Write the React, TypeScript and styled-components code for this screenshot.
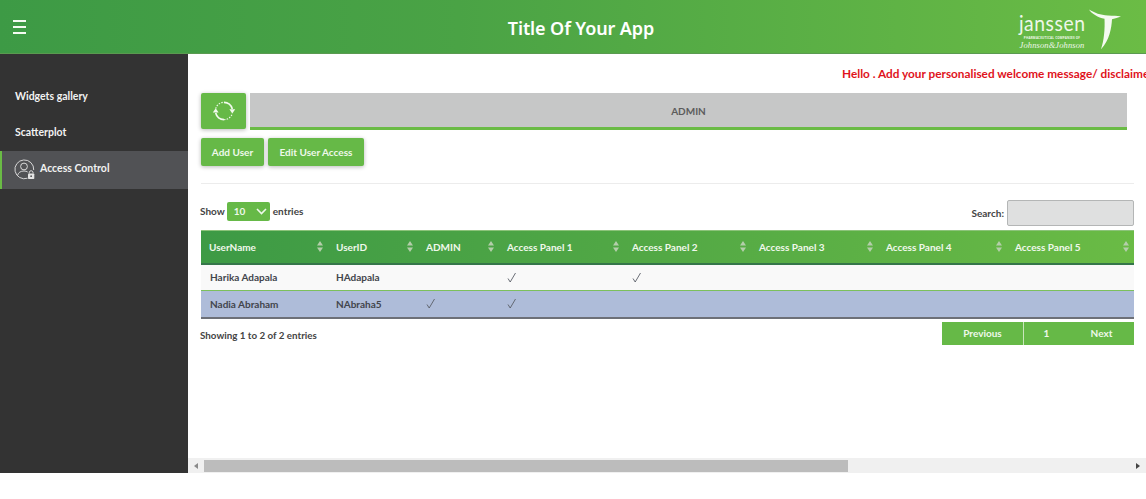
import React from "react";
import styled, { createGlobalStyle } from "styled-components";

const Global = createGlobalStyle`
  html, body { margin: 0; padding: 0; background: #fff; overflow: hidden; }
  body { font-family: "Lato", "Noto Sans", sans-serif; color: #333; }
`;
const Page = styled.div`display: flex; flex-direction: column; height: 473px;`;
const Header = styled.header`
  height: 53px; flex: none; display: grid; grid-template-columns: 1fr auto 1fr; align-items: center;
  background: linear-gradient(90deg, #3d9a45 0%, #4aa345 40%, #6bbc45 100%);
  border-bottom: 1px solid #5a9a50; box-sizing: content-box;
`;
const Burger = styled.button`
  all: unset; display: flex; flex-direction: column; gap: 4px; width: 13px; margin-left: 13px;
  & > span { display: block; height: 2px; background: #f4fbf2; }
`;
const Title = styled.h1`margin: 3px 0 0 16px; font-family: "Noto Sans", sans-serif; font-size: 18px; font-weight: 600; color: #fff; letter-spacing: -.1px;`;
const Logo = styled.div`justify-self: end; display: flex; margin-right: 24px; color: #eef7ea; align-items: flex-start;`;
const LogoText = styled.div`display: flex; flex-direction: column; align-items: center; width: 68px; padding-top: 9px;`;
const Wordmark = styled.span`font: 400 21px/20px "Lato", sans-serif; letter-spacing: .6px; transform: scaleX(.92);`;
const Small = styled.span`font: 700 3px/4px "Noto Sans", sans-serif; letter-spacing: .2px; white-space: nowrap; margin-top: 3px;`;
const Script = styled.span`font: italic 400 8.500px/8px "Liberation Serif", serif; letter-spacing: .1px; white-space: nowrap; margin-top: 1px;`;
const Body = styled.div`flex: 1; display: flex; min-height: 0;`;
const Sidebar = styled.nav`width: 188px; flex: none; background: #333; padding-top: 24px; box-sizing: border-box;`;
const NavItem = styled.a<{ $active?: boolean }>`
  display: flex; align-items: center; gap: 5px; box-sizing: border-box; height: ${p => (p.$active ? 38 : 36.5)}px;
  padding-left: ${p => (p.$active ? 12 : 15)}px; font-size: 10.5px; font-weight: 700; color: #f2f2f2;
  background: ${p => (p.$active ? "#515255" : "transparent")};
  border-left: ${p => (p.$active ? "2px solid #6abb45" : "none")};
  padding-bottom: ${p => (p.$active ? 4 : 1)}px;
`;
const Main = styled.main`flex: 1; min-width: 0; display: flex; flex-direction: column;`;
const Content = styled.div`flex: 1; min-height: 0; overflow: hidden; padding: 0 12px 0 13px; display: flex; flex-direction: column;`;
const Welcome = styled.div`margin: 12px 0 0 641px; height: 27px; width: 400px; white-space: nowrap; color: #e0131c; font-size: 11.8px; font-weight: 700; line-height: 15px;`;
const TabRow = styled.div`display: flex; gap: 4px; margin-right: 7px;`;
const GreenButton = styled.button`
  all: unset; box-sizing: border-box; display: flex; align-items: center; justify-content: center;
  background: #66b947; color: #eef8ea; font-size: 10px; font-weight: 700; border-radius: 2px; box-shadow: 0 1px 4px rgba(0,0,0,.28);
`;
const Refresh = styled(GreenButton)`width: 45px; height: 36px;`;
const Tab = styled.div`
  flex: 1; height: 37px; box-sizing: border-box; background: #c6c7c7; border-bottom: 3px solid #6abb45;
  display: flex; align-items: center; justify-content: center; color: #5c5c5c; font-size: 10px; font-weight: 700; padding-top: 1px;
`;
const Actions = styled.div`display: flex; gap: 4px; margin-top: 8px;`;
const Action = styled(GreenButton)<{ $w: number }>`width: ${p => p.$w}px; height: 28px;`;
const Rule = styled.hr`border: 0; border-top: 1px solid #ececec; margin: 17px 0 0; width: 100%;`;
const Controls = styled.div`display: flex; justify-content: space-between; align-items: center; margin-top: 16px; height: 26px; font-size: 10px; font-weight: 700; color: #444;`;
const Length = styled.label`display: flex; align-items: center; gap: 1px; margin: -4px 0 0 -1px;`;
const Select = styled.span`
  display: flex; align-items: center; justify-content: space-between; width: 43px; height: 19px; box-sizing: border-box; padding: 0 3px 0 7px; margin: 0 2px 0 1px;
  background: #66b947; border-radius: 2px; color: #eef8ea; font-size: 10px;
`;
const SearchBox = styled.label`display: flex; align-items: center; gap: 3px;`;
const Input = styled.input`
  width: 127px; height: 26px; box-sizing: border-box; border: 1px solid #b4b6b6; border-radius: 2px; background: #dfe0e0; padding: 0; margin: 0;
`;
const Table = styled.table`
  width: 933px; border-collapse: collapse; table-layout: fixed; margin-top: 4px; border-top: 1px solid #8cc37a; border-bottom: 2px solid #6d7078; font-size: 10px;
`;
const HeadRow = styled.tr`
  background: linear-gradient(90deg, #3d9a45 0%, #53a945 50%, #6abb45 100%); border-bottom: 2px solid #35764a;
`;
const Th = styled.th`padding: 0 5px 0 8px; height: 33px; box-sizing: border-box; color: #f0f8ec; font-size: 10px; font-weight: 700; text-align: left;`;
const ThInner = styled.div`display: flex; align-items: center; justify-content: space-between; white-space: nowrap;`;
const Row = styled.tr<{ $sel?: boolean }>`
  background: ${p => (p.$sel ? "#aebcd9" : "#f9f9f9")}; border-bottom: ${p => (p.$sel ? "none" : "1px solid #7cc05c")};
`;
const Td = styled.td`padding: 0 0 0 9px; height: 27px; box-sizing: border-box; color: #42454c; font-weight: 700; font-size: 10px; white-space: nowrap; &:not(:first-child){ padding-left: 8px; }`;
const Footer = styled.div`display: flex; justify-content: space-between; align-items: flex-start; margin-top: 3px; font-size: 10px; font-weight: 700; color: #444;`;
const Info = styled.span`margin: 7px 0 0 -1px; font-size: 9.8px;`;
const Pager = styled.div`display: flex; height: 23px; background: #66b947; color: #eef8ea; font-size: 10px; font-weight: 700;`;
const PageLink = styled.span<{ $w: number; $current?: boolean }>`
  width: ${p => p.$w}px; display: flex; align-items: center; justify-content: center;
  ${p => p.$current ? "border-left: 1px solid #c9e6bc; box-sizing: border-box;" : ""}
`;
const ScrollBar = styled.div`height: 15px; flex: none; display: flex; align-items: center; background: #f0f0f0;`;
const Arrow = styled.span`width: 16px; flex: none; display: flex; justify-content: center;`;
const Track = styled.div`flex: 1; height: 12px;`;
const Thumb = styled.div`height: 100%; background: #bcbcbc;`;

const SortIcon = () => (
  <svg width="6" height="11" viewBox="0 0 6 11" style={{ flex: "none" }}>
    <path d="M3 0 6 4.500H0z M3 11 0 6.500h6z" fill="#b4ceaa" />
  </svg>
);
const CheckMark = () => (
  <svg width="10" height="11" viewBox="0 0 10 11" fill="none" stroke="#5a5f68" strokeWidth=".9" style={{ display: "block" }}>
    <path d="M1 6.500 3.200 10 8.500 1" />
  </svg>
);
const RefreshIcon = () => (
  <svg width="24" height="24" viewBox="0 0 24 24" fill="none" stroke="#f2faee" strokeWidth="1.700">
    <path d="M3.700 9.500A8.700 8.700 0 0 1 12 3.300" strokeWidth="1.100" strokeDasharray="1.500 1.200" />
    <path d="M12 3.300A8.700 8.700 0 0 1 20.300 10" />
    <path d="M3.700 14A8.700 8.700 0 0 0 12 20.700" />
    <path d="M12 20.700A8.700 8.700 0 0 0 20.300 14.500" strokeWidth="1.100" strokeDasharray="1.500 1.200" />
    <path d="M.8 13.500h5.800L3.700 9.200z" fill="#f2faee" stroke="none" />
    <path d="M17.400 10.300h5.800l-2.900 4.300z" fill="#f2faee" stroke="none" />
  </svg>
);
const UserLock = () => (
  <svg width="21" height="21" viewBox="0 0 21 21" fill="none" stroke="#e4e4e4" strokeWidth=".9" style={{ flex: "none", marginTop: 3 }}>
    <path d="M13.500 19.200A9.400 9.400 0 1 1 19.700 11" />
    <circle cx="10" cy="7.500" r="3.400" />
    <path d="M3.500 16.500c.7-3 3.200-4.500 6.500-4.500 1.500 0 2.700.3 3.700 1" />
    <rect x="14" y="14.500" width="6.300" height="5.500" rx=".8" fill="#e4e4e4" stroke="none" />
    <path d="M15.300 14.500v-1.300a1.900 1.900 0 0 1 3.700 0v1.300" />
    <circle cx="17.150" cy="17.200" r=".9" fill="#515255" stroke="none" />
  </svg>
);
const Swoosh = () => (
  <svg width="34" height="42" viewBox="0 0 34 42" fill="#f4faf0" style={{ marginLeft: 2, marginTop: 4, flex: "none" }}>
    <path d="M1 1.500C7 5 12 7 20 7.500c5 .3 9 .3 13 1-3 1.200-6 1.800-9 2.800-.5 9-2.500 21-11 30 3-9 4-20 3.500-30.500C10 9.500 4 6 1 1.500z" />
  </svg>
);

const columns = [
  ["UserName", 127], ["UserID", 90], ["ADMIN", 81], ["Access Panel 1", 125],
  ["Access Panel 2", 127], ["Access Panel 3", 127], ["Access Panel 4", 129], ["Access Panel 5", 127],
] as const;
const rows = [
  { name: "Harika Adapala", id: "HAdapala", checks: [false, true, true] },
  { name: "Nadia Abraham", id: "NAbraha5", checks: [true, true, false] },
];

export default function App() {
  return (
    <Page>
      <Global />
      <Header>
        <Burger aria-label="menu"><span /><span /><span /></Burger>
        <Title>Title Of Your App</Title>
        <Logo>
          <LogoText>
            <Wordmark>janssen</Wordmark>
            <Small>PHARMACEUTICAL COMPANIES OF</Small>
            <Script>Johnson&amp;Johnson</Script>
          </LogoText>
          <Swoosh />
        </Logo>
      </Header>
      <Body>
        <Sidebar>
          <NavItem>Widgets gallery</NavItem>
          <NavItem>Scatterplot</NavItem>
          <NavItem $active><UserLock />Access Control</NavItem>
        </Sidebar>
        <Main>
          <Content>
            <Welcome>Hello . Add your personalised welcome message/ disclaimer</Welcome>
            <TabRow>
              <Refresh aria-label="refresh"><RefreshIcon /></Refresh>
              <Tab>ADMIN</Tab>
            </TabRow>
            <Actions>
              <Action $w={63}>Add User</Action>
              <Action $w={96}>Edit User Access</Action>
            </Actions>
            <Rule />
            <Controls>
              <Length>Show <Select>10
                <svg width="11" height="7" viewBox="0 0 11 7" fill="none" stroke="#eef8ea" strokeWidth="1.600"><path d="M1 1l4.500 4.500L10 1" /></svg>
              </Select> entries</Length>
              <SearchBox>Search: <Input aria-label="Search" /></SearchBox>
            </Controls>
            <Table>
              <colgroup>{columns.map(([n, w]) => <col key={n} width={w} />)}</colgroup>
              <thead>
                <HeadRow>
                  {columns.map(([n]) => <Th key={n}><ThInner>{n}<SortIcon /></ThInner></Th>)}
                </HeadRow>
              </thead>
              <tbody>
                {rows.map((r, i) => (
                  <Row key={r.id} $sel={i === 1}>
                    <Td>{r.name}</Td>
                    <Td>{r.id}</Td>
                    {r.checks.map((c, j) => <Td key={j}>{c ? <CheckMark /> : null}</Td>)}
                    <Td /><Td /><Td />
                  </Row>
                ))}
              </tbody>
            </Table>
            <Footer>
              <Info>Showing 1 to 2 of 2 entries</Info>
              <Pager>
                <PageLink $w={81}>Previous</PageLink>
                <PageLink $w={46} $current>1</PageLink>
                <PageLink $w={65}>Next</PageLink>
              </Pager>
            </Footer>
          </Content>
          <ScrollBar>
            <Arrow><svg width="4" height="6" viewBox="0 0 4 6"><path d="M4 0v6L0 3z" fill="#8a8a8a" /></svg></Arrow>
            <Track><Thumb style={{ width: `${(644 / 926) * 100}%` }} /></Track>
            <Arrow><svg width="4" height="6" viewBox="0 0 4 6"><path d="M0 0v6l4-3z" fill="#444" /></svg></Arrow>
          </ScrollBar>
        </Main>
      </Body>
    </Page>
  );
}
